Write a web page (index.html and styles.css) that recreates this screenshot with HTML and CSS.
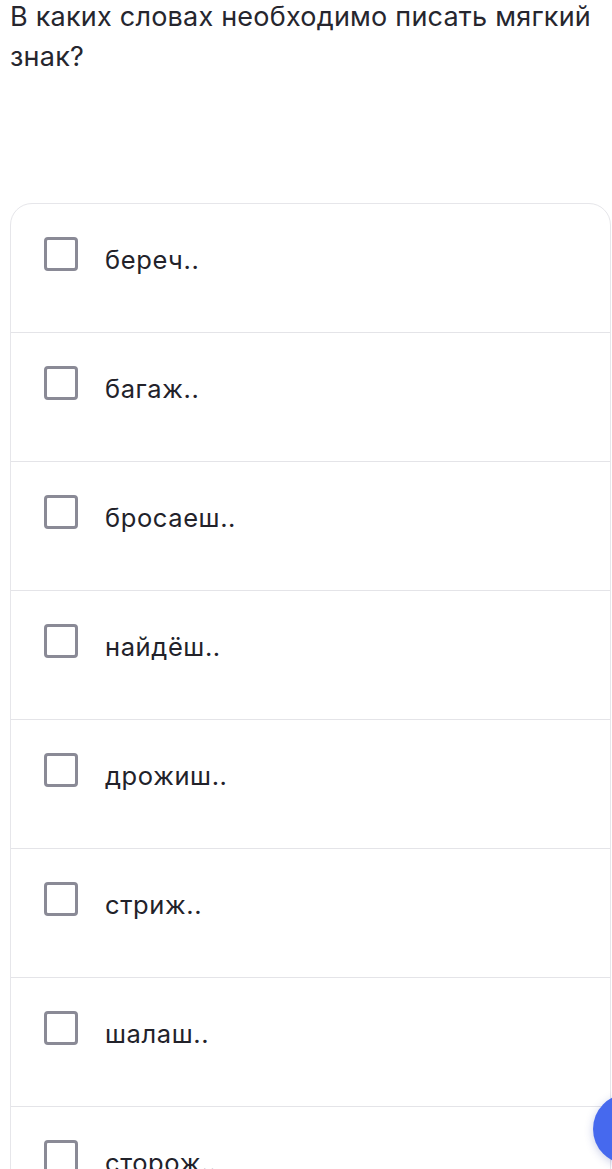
FILE: index.html
```html
<!DOCTYPE html>
<html lang="ru">
<head>
    <meta charset="UTF-8">
    <meta name="viewport" content="width=device-width, initial-scale=1.0">
    <title>Мягкий знак</title>
    <link rel="stylesheet" href="styles.css">
</head>
<body>
    <div class="question">В каких словах необходимо писать мягкий знак?</div>
    <div class="options">
        <label class="option"><span class="box"></span><span class="word">береч..</span></label>
        <label class="option"><span class="box"></span><span class="word">багаж..</span></label>
        <label class="option"><span class="box"></span><span class="word">бросаеш..</span></label>
        <label class="option"><span class="box"></span><span class="word">найдёш..</span></label>
        <label class="option"><span class="box"></span><span class="word">дрожиш..</span></label>
        <label class="option"><span class="box"></span><span class="word">стриж..</span></label>
        <label class="option"><span class="box"></span><span class="word">шалаш..</span></label>
        <label class="option"><span class="box"></span><span class="word">сторож..</span></label>
    </div>
    <div class="fab"></div>
</body>
</html>
```

FILE: styles.css
```css
body {
    margin: 0;
    padding: 0 0 0 10px;
    font-family: Inter, "Noto Sans", sans-serif;
    background-color: #fff;
    color: #25252d;
    overflow: hidden;
    height: 1169px;
    position: relative;
}
.question {
    font-size: 27px;
    line-height: 40px;
    margin-top: -3px;
    padding-right: 2px;
    color: #26262e;
    letter-spacing: 0.22px;
}
.options {
    margin-top: 126px;
    border: 1px solid #e6e6ea;
    border-radius: 22px;
    margin-right: 1px;
}
.option {
    display: flex;
    align-items: flex-start;
    height: 129px;
    box-sizing: border-box;
    padding: 33px 0 0 33px;
    border-bottom: 1px solid #e4e4e8;
}
.option:last-child {
    border-bottom: none;
}
.box {
    width: 34px;
    height: 34px;
    box-sizing: border-box;
    border: 3px solid #8a8a96;
    border-radius: 4px;
    flex-shrink: 0;
}
.word {
    margin-left: 27px;
    font-size: 25.5px;
    line-height: 48px;
    margin-top: -1px;
    letter-spacing: 0.6px;
    color: #22222a;
}
.fab {
    position: absolute;
    left: 593px;
    top: 1094px;
    width: 70px;
    height: 70px;
    border-radius: 50%;
    background-color: #4669ee;
    box-shadow: 0 2px 8px rgba(40, 60, 160, 0.25);
}
```
